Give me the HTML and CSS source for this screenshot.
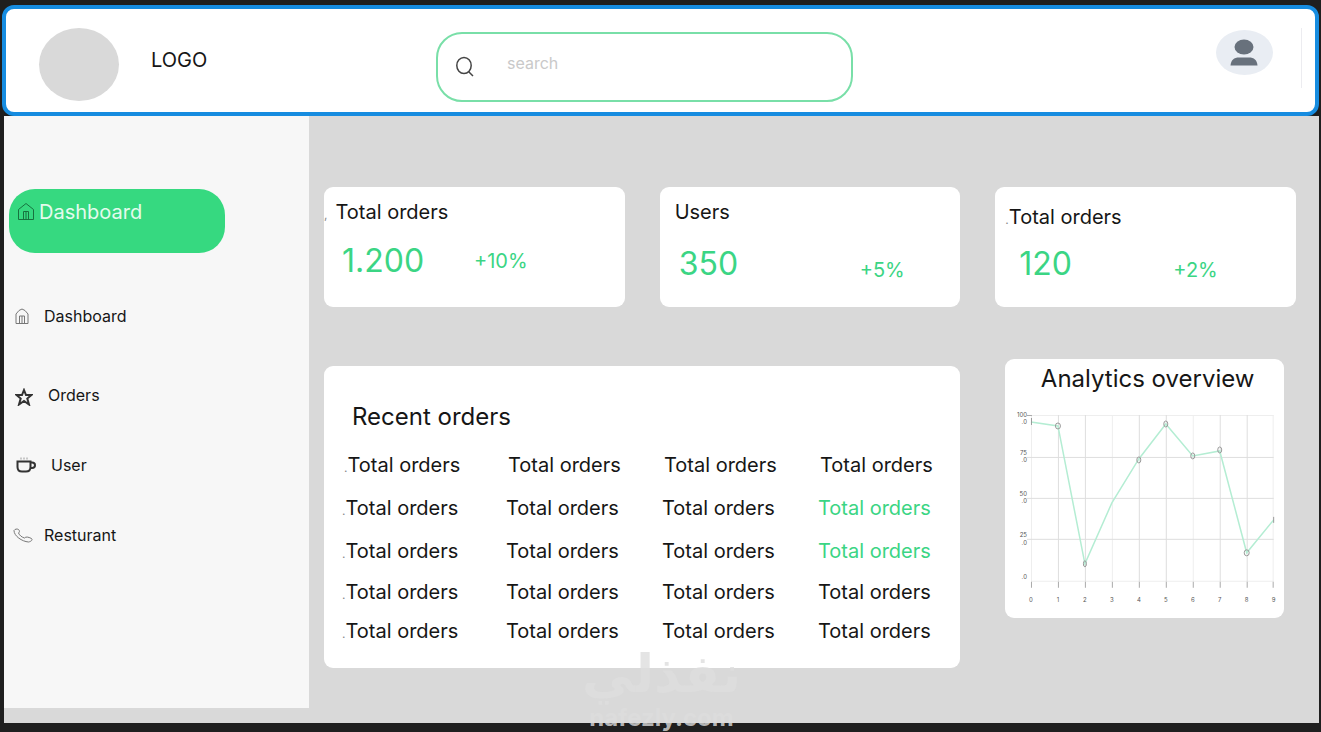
FILE: index.html
```html
<!DOCTYPE html>
<html lang="en">
<head>
  <meta charset="UTF-8" />
  <meta name="viewport" content="width=device-width, initial-scale=1.0" />
  <title>Dashboard</title>
  <link rel="stylesheet" href="styles.css">
</head>
<body>

  <header class="header">
    <div class="brand">
      <div class="logo-circle"></div>
      <span class="logo-text">LOGO</span>
    </div>

    <div class="search-box">
      <svg class="search-icon" viewBox="0 0 20 22" aria-hidden="true">
        <ellipse cx="9" cy="9.5" rx="7.2" ry="8" />
        <path d="M13.5 15.5L18 20" />
      </svg>
      <input type="text" class="search-input" placeholder="search" aria-label="search" />
    </div>

    <div class="account">
      <svg class="user-icon" viewBox="0 0 57 45" role="img" aria-label="User">
        <ellipse cx="28.5" cy="22.5" rx="28.5" ry="22.5" fill="#e9edf3" />
        <ellipse cx="28" cy="17" rx="9.5" ry="7.5" fill="#68717c" />
        <path d="M14.500 35.500C15 30 18 27.500 23 27.500H33C38 27.500 41 30 41.500 35.500Z" fill="#68717c" />
      </svg>
      <div class="divider"></div>
    </div>
  </header>

  <div class="layout">
    <nav class="sidebar">
      <a href="#" class="nav-active">
        <svg class="icon-home" viewBox="0 0 18 19" aria-hidden="true">
          <path d="M1.500 17.500V7.500L9 1.500L16.500 7.500V17.500ZM6.500 17.500V9.500H11.500V17.500M9 9.500V17.500" />
        </svg>
        Dashboard
      </a>

      <a href="#" class="nav-link nav-home">
        <svg viewBox="0 0 14 17" width="14" height="17" aria-hidden="true">
          <path d="M1 15.500V6L4 2.500L7 1L10 2.500L13 6V15.500ZM4.500 15.500V8H9.500V15.500M7 8V15.500" />
        </svg>
        <span>Dashboard</span>
      </a>
      <a href="#" class="nav-link nav-orders">
        <svg class="icon-bold" viewBox="0 0 18 18" width="18" height="18" aria-hidden="true">
          <path d="M9 2L11 7H16.500L12.300 10.500L14 16.500L9 13L4 16.500L5.700 10.500L1.500 7H7Z" />
        </svg>
        <span>Orders</span>
      </a>
      <a href="#" class="nav-link nav-user">
        <svg class="icon-bold" viewBox="0 0 20 16" width="20" height="16" aria-hidden="true">
          <path d="M1.500 4.500H14.500V10C14.500 13 13 14.500 10 14.500H6C3 14.500 1.500 13 1.500 10ZM14.500 5.500H16C20 5.500 20 11 16 11H14.500" />
          <path class="steam" d="M5 .5V2.500M8 .5V2.500M11 .5V2.500" />
        </svg>
        <span>User</span>
      </a>
      <a href="#" class="nav-link nav-restaurant">
        <svg viewBox="0 0 20 15" width="20" height="15" aria-hidden="true">
          <path d="M1 2.500C2 1 4 .6 5.500 1.500C7 3 6.500 4 5.500 5C6.500 7.500 9 9.300 11.500 10C13 8.500 15 8.800 18.500 10.500C20 12 18 13.500 15.500 14C9 13.500 1 8 1 2.500Z" />
        </svg>
        <span>Resturant</span>
      </a>
    </nav>

    <main class="content">
      <section class="card stat stat-orders">
        <h3><i>,</i>Total orders</h3>
        <div class="stat-row"><span class="value">1.200</span><span class="change">+10%</span></div>
      </section>
      <section class="card stat stat-users">
        <h3>Users</h3>
        <div class="stat-row"><span class="value">350</span><span class="change">+5%</span></div>
      </section>
      <section class="card stat stat-total">
        <h3><i>.</i>Total orders</h3>
        <div class="stat-row"><span class="value">120</span><span class="change">+2%</span></div>
      </section>

      <section class="card recent">
        <h2>Recent orders</h2>
        <table class="orders">
          <thead>
            <tr><th><i>.</i>Total orders</th><th>Total orders</th><th>Total orders</th><th>Total orders</th></tr>
          </thead>
          <tbody>
            <tr><td><i>.</i>Total orders</td><td>Total orders</td><td>Total orders</td><td class="green">Total orders</td></tr>
            <tr><td><i>.</i>Total orders</td><td>Total orders</td><td>Total orders</td><td class="green">Total orders</td></tr>
            <tr class="short"><td><i>.</i>Total orders</td><td>Total orders</td><td>Total orders</td><td>Total orders</td></tr>
            <tr class="short"><td><i>.</i>Total orders</td><td>Total orders</td><td>Total orders</td><td>Total orders</td></tr>
          </tbody>
        </table>
      </section>

      <section class="card analytics">
        <h2>Analytics overview</h2>
        <svg class="chart" viewBox="0 0 279 210" role="img" aria-label="Analytics overview chart">
          <path class="grid-light" d="M26 7.500H269M26 173.500H269M26.500 7V174M107.500 7V174M188.500 7V174M268.500 7V174" />
          <path class="grid" d="M22 49.500H269M22 90.500H269M22 131.500H269M53.500 7V174M80.500 7V174M134.500 7V174M161.500 7V174M215.500 7V174M242.500 7V174" />
          <path class="tick" d="M26.500 174V180M53.500 174V180M80.500 174V180M107.500 174V180M134.500 174V180M161.500 174V180M188.500 174V180M215.500 174V180M242.500 174V180M268.500 174V180M22 7.500H27" />
          <polyline class="line" points="26,14 53,18 80,156 107,95 134,51 161,16 188,48 215,43 242,145 269,112" />
          <g class="dots">
            <path d="M26.500 10V17M269 109V115" />
            <ellipse cx="53" cy="18" rx="2.500" ry="3" />
            <ellipse cx="80" cy="156" rx="1.500" ry="3" />
            <ellipse cx="134" cy="52" rx="2" ry="3" />
            <ellipse cx="161" cy="16" rx="2" ry="3" />
            <ellipse cx="188" cy="48" rx="2" ry="3" />
            <ellipse cx="215" cy="42" rx="2" ry="3" />
            <ellipse cx="242" cy="145" rx="2.500" ry="3" />
          </g>
          <g class="axis axis-y">
            <text x="22" y="9">100</text><text x="22" y="16">.0</text>
            <text x="22" y="47">75</text><text x="22" y="54">.0</text>
            <text x="22" y="88">50</text><text x="22" y="95">.0</text>
            <text x="22" y="129">25</text><text x="22" y="137">.0</text>
            <text x="22" y="171">.0</text>
          </g>
          <g class="axis axis-x">
            <text x="26" y="194">0</text><text x="53" y="194">1</text>
            <text x="80" y="194">2</text><text x="107" y="194">3</text>
            <text x="134" y="194">4</text><text x="161" y="194">5</text>
            <text x="188" y="194">6</text><text x="215" y="194">7</text>
            <text x="242" y="194">8</text><text x="269" y="194">9</text>
          </g>
        </svg>
      </section>
    </main>
  </div>

  <!-- watermark -->
  <div class="watermark">
    <span class="watermark-ar" lang="ar" dir="rtl">نفذلي</span>
    <span class="watermark-url">nafezly.com</span>
  </div>

</body>
</html>
```

FILE: styles.css
```css
* {
  box-sizing: border-box;
}

body {
  margin: 0;
  padding: 5px 2px 9px;
  min-height: 100vh;
  display: flex;
  flex-direction: column;
  position: relative;
  overflow: hidden;
  background: #1f1f1f;
  color: #161616;
  font-family: Inter, sans-serif;
  font-size: 20px;
}

h2, h3 {
  margin: 0;
  font-weight: 400;
}

a {
  color: inherit;
  text-decoration: none;
}

i {
  font-style: normal;
  font-size: 12px;
  line-height: 0;
  color: #888;
}

/* header */
.header {
  display: flex;
  align-items: flex-start;
  height: 111px;
  padding: 19px 13px 0 33px;
  background: #fff;
  border: 4px solid #168ce0;
  border-radius: 12px;
}

.brand {
  display: flex;
  flex: 0 0 397px;
  gap: 32px;
}

.logo-circle {
  width: 80px;
  height: 73px;
  border-radius: 50%;
  background: #d9d9d9;
}

.logo-text {
  margin-top: 20px;
  line-height: 24px;
}

.search-box {
  display: flex;
  align-items: center;
  flex: 0 1 417px;
  height: 70px;
  margin-top: 4px;
  padding: 0 20px 0 17px;
  border: 2px solid #79dfa8;
  border-radius: 26px;
}

.search-icon {
  width: 20px;
  height: 22px;
  fill: none;
  stroke: #444;
  stroke-width: 1.5;
}

.search-input {
  flex: 1;
  min-width: 0;
  margin: 0 0 8px 32px;
  padding: 0;
  border: none;
  outline: none;
  background: none;
  font: 16px/24px Inter, sans-serif;
}

.search-input::placeholder {
  color: #c9c9c9;
  opacity: 1;
}

.account {
  display: flex;
  gap: 28px;
  margin-left: auto;
}

.user-icon {
  width: 57px;
  height: 45px;
  margin-top: 2px;
}

.divider {
  width: 1px;
  height: 60px;
  background: #ececf0;
}

/* page under the header */
.layout {
  display: flex;
  flex: 1;
  margin-left: 2px;
  background: #d9d9d9;
}

.sidebar {
  display: flex;
  flex-direction: column;
  align-items: flex-start;
  flex: 0 0 305px;
  margin-bottom: 15px;
  padding: 73px 0 0 5px;
  background: #f7f7f7;
  font-size: 16px;
}

.sidebar svg {
  flex: none;
  fill: none;
  stroke: #777;
  stroke-width: 1;
}

.nav-active {
  display: flex;
  align-items: flex-start;
  gap: 4px;
  width: 216px;
  height: 64px;
  padding: 11px 8px;
  border-radius: 26px;
  background: #36d980;
  color: #e4fbed;
  font-size: 20px;
  line-height: 24px;
}

.nav-active .icon-home {
  width: 18px;
  height: 19px;
  margin-top: 2px;
  stroke: #17733f;
}

.nav-link {
  display: flex;
  align-items: center;
  gap: 15px;
  line-height: 24px;
}

.sidebar .icon-bold {
  stroke: #333;
  stroke-width: 2;
}

.sidebar .steam {
  stroke: #999;
  stroke-width: 1;
}

.nav-home {
  margin-top: 51px;
  padding-left: 6px;
}

.nav-orders {
  margin-top: 55px;
  padding-left: 6px;
}

.nav-orders svg {
  margin-top: 4px;
}

.nav-user {
  margin-top: 46px;
  padding-left: 7px;
}

.nav-restaurant {
  gap: 11px;
  margin-top: 46px;
  padding-left: 4px;
}

.content {
  flex: 1;
  display: grid;
  grid-template-columns: repeat(3, 1fr);
  grid-template-rows: 120px auto;
  align-content: start;
  align-items: start;
  gap: 52px 35px;
  padding: 71px 23px 0 15px;
}

.card {
  background: #fff;
  border-radius: 9px;
}

/* stat cards */
.stat {
  height: 120px;
  padding: 13px 15px;
}

.stat h3 {
  font-size: 20px;
  line-height: 24px;
}

.stat-row {
  display: flex;
  align-items: center;
  margin-top: 17px;
}

.value {
  font-size: 32px;
  line-height: 40px;
  color: #3bd584;
}

.change {
  line-height: 24px;
  color: #3bd584;
}

.stat-orders {
  padding-left: 0;
}

.stat-orders i {
  margin-right: 8px;
}

.stat-orders .value {
  width: 132px;
  margin-left: 18px;
}

.stat-users .stat-row {
  margin-top: 20px;
}

.stat-users .value {
  width: 181px;
  margin-left: 4px;
}

.stat-users .change,
.stat-total .change {
  margin-top: 11px;
}

.stat-total {
  padding: 18px 10px;
}

.stat-total .stat-row {
  margin-top: 15px;
}

.stat-total .value {
  width: 154px;
  margin-left: 14px;
}

/* recent orders */
.recent {
  grid-column: span 2;
  margin-top: 7px;
  padding: 35px 0 18px 18px;
}

.recent h2 {
  padding-left: 10px;
  font-size: 24px;
  line-height: 32px;
}

.orders {
  width: 100%;
  margin-top: 10px;
  border-collapse: collapse;
  table-layout: fixed;
}

.orders th,
.orders td {
  height: 43px;
  padding: 0;
  font-weight: 400;
  line-height: 24px;
  text-align: left;
}

.orders th {
  width: 156px;
  padding-left: 2px;
}

.orders th:first-child {
  width: 164px;
}

.orders th:last-child {
  width: auto;
}

.orders .short td {
  height: 39px;
}

.orders .green {
  color: #3bd584;
}

/* analytics */
.analytics {
  margin: 0 12px 0 10px;
  padding-top: 4px;
}

.analytics h2 {
  padding-left: 6px;
  font-size: 24px;
  line-height: 32px;
  text-align: center;
}

.chart {
  display: block;
  width: 100%;
  margin-top: 13px;
}

.chart path,
.chart .line {
  fill: none;
}

.grid-light {
  stroke: #eee;
}

.grid {
  stroke: #dedede;
}

.tick {
  stroke: #aaa;
}

.line {
  stroke: #b4edd3;
  stroke-width: 1.5;
}

.dots {
  fill: none;
  stroke: #999;
}

.axis {
  fill: #555;
  font-size: 6px;
}

.axis-y {
  text-anchor: end;
}

.axis-x {
  text-anchor: middle;
}

/* watermark */
.watermark {
  position: absolute;
  left: 50%;
  bottom: -2px;
  width: 160px;
  margin-left: -79px;
  display: flex;
  flex-direction: column;
  align-items: center;
  color: rgba(221, 221, 221, 0.8);
  font-weight: 700;
  pointer-events: none;
}

.watermark-ar {
  font-family: "DejaVu Sans", sans-serif;
  font-size: 52px;
  line-height: 56px;
}

.watermark-url {
  font-size: 24px;
  line-height: 32px;
}
```
